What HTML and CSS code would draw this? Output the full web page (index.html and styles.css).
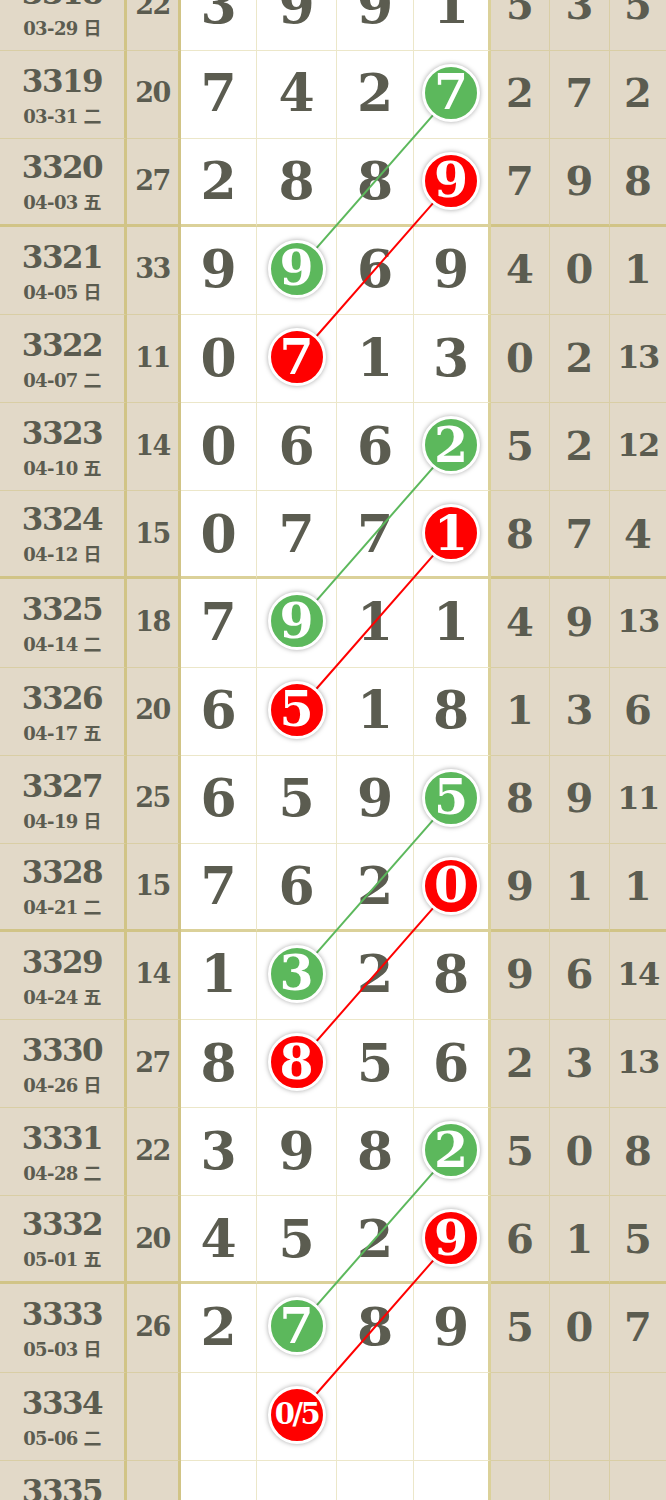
FILE: index.html
```html
<!DOCTYPE html>
<html lang="zh">
<head>
<meta charset="utf-8">
<title>走势图</title>
<link rel="stylesheet" href="styles.css">
</head>
<body>
<div class="chart">
  <svg class="links" width="666" height="1600" viewBox="0 0 666 1600">
    <line class="lg" x1="451" y1="131.6" x2="296.5" y2="307.9"/>
    <line class="lr" x1="451" y1="219.7" x2="296.5" y2="396"/>
    <line class="lg" x1="451" y1="484.1" x2="296.5" y2="660.4"/>
    <line class="lr" x1="451" y1="572.2" x2="296.5" y2="748.5"/>
    <line class="lg" x1="451" y1="836.6" x2="296.5" y2="1012.9"/>
    <line class="lr" x1="451" y1="924.7" x2="296.5" y2="1101"/>
    <line class="lg" x1="451" y1="1189.1" x2="296.5" y2="1365.4"/>
    <line class="lr" x1="451" y1="1277.2" x2="296.5" y2="1453.5"/>
  </svg>

  <div class="row">
    <div class="c iss"><span class="no">3318</span><span class="dt">03-29 日</span></div>
    <div class="c sum">22</div>
    <div class="c d">3</div><div class="c d">9</div><div class="c d">9</div><div class="c d d4">1</div>
    <div class="c r">5</div><div class="c r">3</div><div class="c r">5</div>
  </div>
  <div class="row">
    <div class="c iss"><span class="no">3319</span><span class="dt">03-31 二</span></div>
    <div class="c sum">20</div>
    <div class="c d">7</div><div class="c d">4</div><div class="c d">2</div><div class="c d d4"><span class="ball g">7</span></div>
    <div class="c r">2</div><div class="c r">7</div><div class="c r">2</div>
  </div>
  <div class="row end">
    <div class="c iss"><span class="no">3320</span><span class="dt">04-03 五</span></div>
    <div class="c sum">27</div>
    <div class="c d">2</div><div class="c d">8</div><div class="c d">8</div><div class="c d d4"><span class="ball r">9</span></div>
    <div class="c r">7</div><div class="c r">9</div><div class="c r">8</div>
  </div>

  <div class="row">
    <div class="c iss"><span class="no">3321</span><span class="dt">04-05 日</span></div>
    <div class="c sum">33</div>
    <div class="c d">9</div><div class="c d"><span class="ball g">9</span></div><div class="c d">6</div><div class="c d d4">9</div>
    <div class="c r">4</div><div class="c r">0</div><div class="c r">1</div>
  </div>
  <div class="row">
    <div class="c iss"><span class="no">3322</span><span class="dt">04-07 二</span></div>
    <div class="c sum">11</div>
    <div class="c d">0</div><div class="c d"><span class="ball r">7</span></div><div class="c d">1</div><div class="c d d4">3</div>
    <div class="c r">0</div><div class="c r">2</div><div class="c r two">13</div>
  </div>
  <div class="row">
    <div class="c iss"><span class="no">3323</span><span class="dt">04-10 五</span></div>
    <div class="c sum">14</div>
    <div class="c d">0</div><div class="c d">6</div><div class="c d">6</div><div class="c d d4"><span class="ball g">2</span></div>
    <div class="c r">5</div><div class="c r">2</div><div class="c r two">12</div>
  </div>
  <div class="row end">
    <div class="c iss"><span class="no">3324</span><span class="dt">04-12 日</span></div>
    <div class="c sum">15</div>
    <div class="c d">0</div><div class="c d">7</div><div class="c d">7</div><div class="c d d4"><span class="ball r">1</span></div>
    <div class="c r">8</div><div class="c r">7</div><div class="c r">4</div>
  </div>

  <div class="row">
    <div class="c iss"><span class="no">3325</span><span class="dt">04-14 二</span></div>
    <div class="c sum">18</div>
    <div class="c d">7</div><div class="c d"><span class="ball g">9</span></div><div class="c d">1</div><div class="c d d4">1</div>
    <div class="c r">4</div><div class="c r">9</div><div class="c r two">13</div>
  </div>
  <div class="row">
    <div class="c iss"><span class="no">3326</span><span class="dt">04-17 五</span></div>
    <div class="c sum">20</div>
    <div class="c d">6</div><div class="c d"><span class="ball r">5</span></div><div class="c d">1</div><div class="c d d4">8</div>
    <div class="c r">1</div><div class="c r">3</div><div class="c r">6</div>
  </div>
  <div class="row">
    <div class="c iss"><span class="no">3327</span><span class="dt">04-19 日</span></div>
    <div class="c sum">25</div>
    <div class="c d">6</div><div class="c d">5</div><div class="c d">9</div><div class="c d d4"><span class="ball g">5</span></div>
    <div class="c r">8</div><div class="c r">9</div><div class="c r two">11</div>
  </div>
  <div class="row end">
    <div class="c iss"><span class="no">3328</span><span class="dt">04-21 二</span></div>
    <div class="c sum">15</div>
    <div class="c d">7</div><div class="c d">6</div><div class="c d">2</div><div class="c d d4"><span class="ball r">0</span></div>
    <div class="c r">9</div><div class="c r">1</div><div class="c r">1</div>
  </div>

  <div class="row">
    <div class="c iss"><span class="no">3329</span><span class="dt">04-24 五</span></div>
    <div class="c sum">14</div>
    <div class="c d">1</div><div class="c d"><span class="ball g">3</span></div><div class="c d">2</div><div class="c d d4">8</div>
    <div class="c r">9</div><div class="c r">6</div><div class="c r two">14</div>
  </div>
  <div class="row">
    <div class="c iss"><span class="no">3330</span><span class="dt">04-26 日</span></div>
    <div class="c sum">27</div>
    <div class="c d">8</div><div class="c d"><span class="ball r">8</span></div><div class="c d">5</div><div class="c d d4">6</div>
    <div class="c r">2</div><div class="c r">3</div><div class="c r two">13</div>
  </div>
  <div class="row">
    <div class="c iss"><span class="no">3331</span><span class="dt">04-28 二</span></div>
    <div class="c sum">22</div>
    <div class="c d">3</div><div class="c d">9</div><div class="c d">8</div><div class="c d d4"><span class="ball g">2</span></div>
    <div class="c r">5</div><div class="c r">0</div><div class="c r">8</div>
  </div>
  <div class="row end">
    <div class="c iss"><span class="no">3332</span><span class="dt">05-01 五</span></div>
    <div class="c sum">20</div>
    <div class="c d">4</div><div class="c d">5</div><div class="c d">2</div><div class="c d d4"><span class="ball r">9</span></div>
    <div class="c r">6</div><div class="c r">1</div><div class="c r">5</div>
  </div>

  <div class="row">
    <div class="c iss"><span class="no">3333</span><span class="dt">05-03 日</span></div>
    <div class="c sum">26</div>
    <div class="c d">2</div><div class="c d"><span class="ball g">7</span></div><div class="c d">8</div><div class="c d d4">9</div>
    <div class="c r">5</div><div class="c r">0</div><div class="c r">7</div>
  </div>
  <div class="row">
    <div class="c iss"><span class="no">3334</span><span class="dt">05-06 二</span></div>
    <div class="c sum"></div>
    <div class="c d"></div><div class="c d"><span class="ball r frac">0/5</span></div><div class="c d"></div><div class="c d d4"></div>
    <div class="c r"></div><div class="c r"></div><div class="c r"></div>
  </div>
  <div class="row">
    <div class="c iss"><span class="no">3335</span><span class="dt">05-08 五</span></div>
    <div class="c sum"></div>
    <div class="c d"></div><div class="c d"></div><div class="c d"></div><div class="c d d4"></div>
    <div class="c r"></div><div class="c r"></div><div class="c r"></div>
  </div>
</div>
</body>
</html>
```

FILE: styles.css
```css
html, body {
  margin: 0;
  padding: 0;
  background: #ffffff;
}

body {
  font-family: "DejaVu Serif", "Noto Sans CJK SC", serif;
  font-weight: 700;
  color: #5b5c50;
  overflow: hidden;
}

.chart {
  position: relative;
  width: 666px;
  margin-top: -37.5px;
}

.links {
  position: absolute;
  left: 0;
  top: 0;
  z-index: 1;
  pointer-events: none;
}

.links .lg {
  stroke: #5cb85c;
  stroke-width: 2;
}

.links .lr {
  stroke: #ff0000;
  stroke-width: 2;
}

.row {
  display: grid;
  grid-template-columns: 127px 54px 76px 80px 77px 77px 59px 60px 56px;
  height: 88.125px;
}

.c {
  box-sizing: border-box;
  display: flex;
  align-items: center;
  justify-content: center;
  background: #e2d9c8;
  border-right: 1px solid rgba(200, 185, 100, 0.35);
  border-bottom: 1px solid rgba(200, 185, 100, 0.35);
  padding-bottom: 3px;
}

.row.end .c {
  border-bottom: 3px solid rgba(200, 185, 100, 0.65);
  padding-bottom: 1px;
}

.iss,
.sum,
.d4 {
  border-right: 3px solid rgba(200, 185, 100, 0.65);
}

.c.r:last-child {
  border-right: 0;
}

.iss {
  flex-direction: column;
  padding-top: 3px;
  padding-bottom: 0;
}

.row.end .iss {
  padding-bottom: 0;
  padding-top: 1px;
}

.no {
  font-size: 31px;
  line-height: 36px;
  letter-spacing: -1.5px;
}

.dt {
  font-size: 18px;
  line-height: 24px;
  margin-top: 6px;
  letter-spacing: -0.6px;
}

.sum {
  font-size: 27px;
  letter-spacing: -1.5px;
}

.d {
  background: #ffffff;
  font-size: 52px;
}

.r {
  font-size: 40px;
}

.r.two {
  font-size: 32px;
  letter-spacing: -1.5px;
}

.ball {
  position: relative;
  z-index: 2;
  box-sizing: border-box;
  width: 58px;
  height: 58px;
  border: 3px solid #ffffff;
  border-radius: 50%;
  box-shadow: 0 0 5px rgba(0, 0, 0, 0.35);
  display: flex;
  align-items: center;
  justify-content: center;
  color: #ffffff;
  font-size: 49px;
  line-height: 1;
}

.ball.g {
  background: #5cb85c;
}

.ball.r {
  background: #ff0000;
}

.ball.frac {
  font-size: 29px;
  letter-spacing: -2.5px;
}
```
